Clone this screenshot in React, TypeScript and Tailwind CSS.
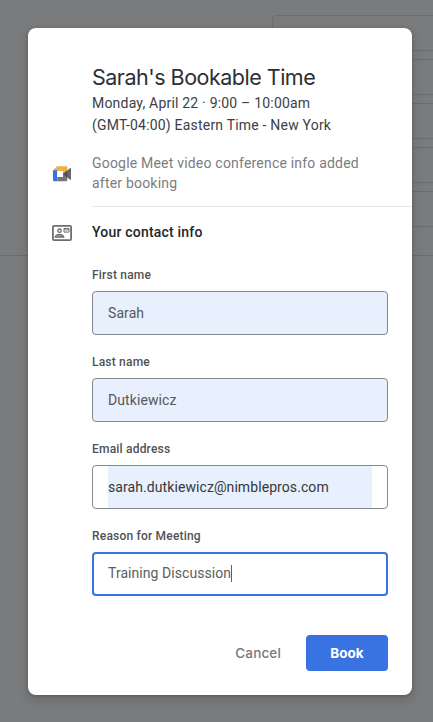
const fields = [
  { label: "First name", value: "Sarah", kind: "filled" },
  { label: "Last name", value: "Dutkiewicz", kind: "filled" },
  { label: "Email address", value: "sarah.dutkiewicz@nimblepros.com", kind: "email" },
  { label: "Reason for Meeting", value: "Training Discussion", kind: "focused" },
];

function MeetIcon() {
  return (
    <svg width="20" height="18" viewBox="0 0 20 18">
      <path d="M1.3 5.3 5 1.2h9.2a1.2 1.2 0 0 1 1.2 1.2V9H11V6H1.3Z" fill="#efb044" />
      <path d="M1 5.3h4.3v10.9H2.2A1.2 1.2 0 0 1 1 15Z" fill="#3871e0" />
      <path d="M5.3 12H11V8.5l4.3-1V15a1.3 1.3 0 0 1-1.3 1.3H5.3Z" fill="#747779" />
      <path d="M11 9 18.2 3.1c.4-.3.8-.1.8.4v10.8c0 .5-.4.7-.8.4L11 9Z" fill="#65696b" />
      <path d="M11 9 15.3 5.5v7Z" fill="#505456" />
      <path d="M5.3 6H11v6H5.3Z" fill="#fff" />
    </svg>
  );
}

function ContactIcon() {
  return (
    <svg width="20" height="16" viewBox="0 0 20 16" fill="none" stroke="#6b6f72">
      <rect x="0.9" y="0.9" width="18.2" height="14.2" rx="1.2" strokeWidth="1.8" />
      <circle cx="7.5" cy="5.7" r="1.7" strokeWidth="1.4" />
      <path d="M3.2 12.2c0-2 2.8-2.9 4.3-2.9s4.3.9 4.3 2.9Z" strokeWidth="1.3" fill="#999b9c" />
      <path d="M12 3.5h5v3.6h-5Zm0 .2 2.5 1.7L17 3.7" strokeWidth="1" />
    </svg>
  );
}

function Field({ label, value, kind }: { label: string; value: string; kind: string }) {
  return (
    <div className="h-[87px]">
      <div className="h-[26px] pt-0.5 text-[12px] leading-4 font-medium tracking-[0.2px] text-[#505356]">{label}</div>
      <div
        className={
          kind === "focused"
            ? "flex h-11 rounded-[4px] border-2 border-[#3972df] px-3.5"
            : kind === "filled"
              ? "flex h-11 rounded-[4px] border border-[#85888c] bg-[#e8effd] px-[15px]"
              : "flex h-11 rounded-[4px] border border-[#85888c] px-[15px]"
        }
      >
        <div
          className={
            kind === "email"
              ? "flex flex-1 items-center bg-[#e8effd] text-[14px] tracking-[0.08px] text-[#35383b]"
              : kind === "focused"
                ? "flex flex-1 items-center pb-0.5 text-[14px] tracking-[0.06px] text-[#5b5e61]"
                : "flex flex-1 items-center text-[14px] tracking-[0.08px] text-[#55585c]"
          }
        >
          {value}
          {kind === "focused" && <span className="h-[17px] w-px bg-[#3c63ae]" />}
        </div>
      </div>
    </div>
  );
}

export default function App() {
  return (
    <div className="relative h-[722px] w-[433px] overflow-hidden bg-[#7a7b7d] font-['Roboto','Liberation_Sans',sans-serif]">
      <div className="flex h-[256px] flex-col gap-[8px] border-b border-[#6a6c6e] pt-[15px] pl-[272px]">
        {[0, 1, 2, 3, 4].map((i) => (
          <div key={i} className="h-9 w-[200px] shrink-0 rounded-[4px] border border-[#6a6c6e]" />
        ))}
      </div>
      <section className="absolute top-[28px] left-[28px] flex h-[667px] w-[384px] flex-col rounded-[8px] bg-white pt-[36px] shadow-[0_4px_8px_3px_rgba(0,0,0,0.10),0_1px_3px_rgba(0,0,0,0.2)]">
        <header className="pl-16 text-[#2c2f33]">
          <h1 className="h-7 font-['Inter',sans-serif] text-[21.5px] leading-[27px] tracking-[-0.5px] whitespace-nowrap">Sarah's Bookable Time</h1>
          <p className="text-[14px] leading-[22px] tracking-[0.2px] text-[#3c4043]">Monday, April 22 · 9:00 – 10:00am</p>
          <p className="text-[14px] leading-[22px] tracking-[0.2px] text-[#3c4043]">(GMT-04:00) Eastern Time - New York</p>
        </header>
        <div className="mt-[17px] flex h-[54px]">
          <div className="w-16 pt-[12px] pl-6"><MeetIcon /></div>
          <p className="flex-1 border-b border-[#e8e8e8] text-[14px] leading-5 tracking-[0.2px] text-[#7a7d80]">
            Google Meet video conference info added<br />after booking
          </p>
        </div>
        <div className="flex h-[51px] items-center">
          <div className="w-16 pl-6"><ContactIcon /></div>
          <h2 className="text-[14px] font-medium tracking-[0.2px] text-[#222529]">Your contact info</h2>
        </div>
        <div className="mt-[7px] h-[348px] pr-6 pl-16">
          {fields.map((f) => <Field key={f.label} {...f} />)}
        </div>
        <footer className="mt-[22px] flex justify-end gap-[25px] pr-6 font-['Inter',sans-serif] text-[13.5px]">
          <button className="h-9 font-medium tracking-[0.15px] text-[#75787b]">Cancel</button>
          <button className="h-9 w-[82px] rounded-[4px] bg-[#3973e1] font-bold tracking-[0px] text-white">Book</button>
        </footer>
      </section>
    </div>
  );
}
